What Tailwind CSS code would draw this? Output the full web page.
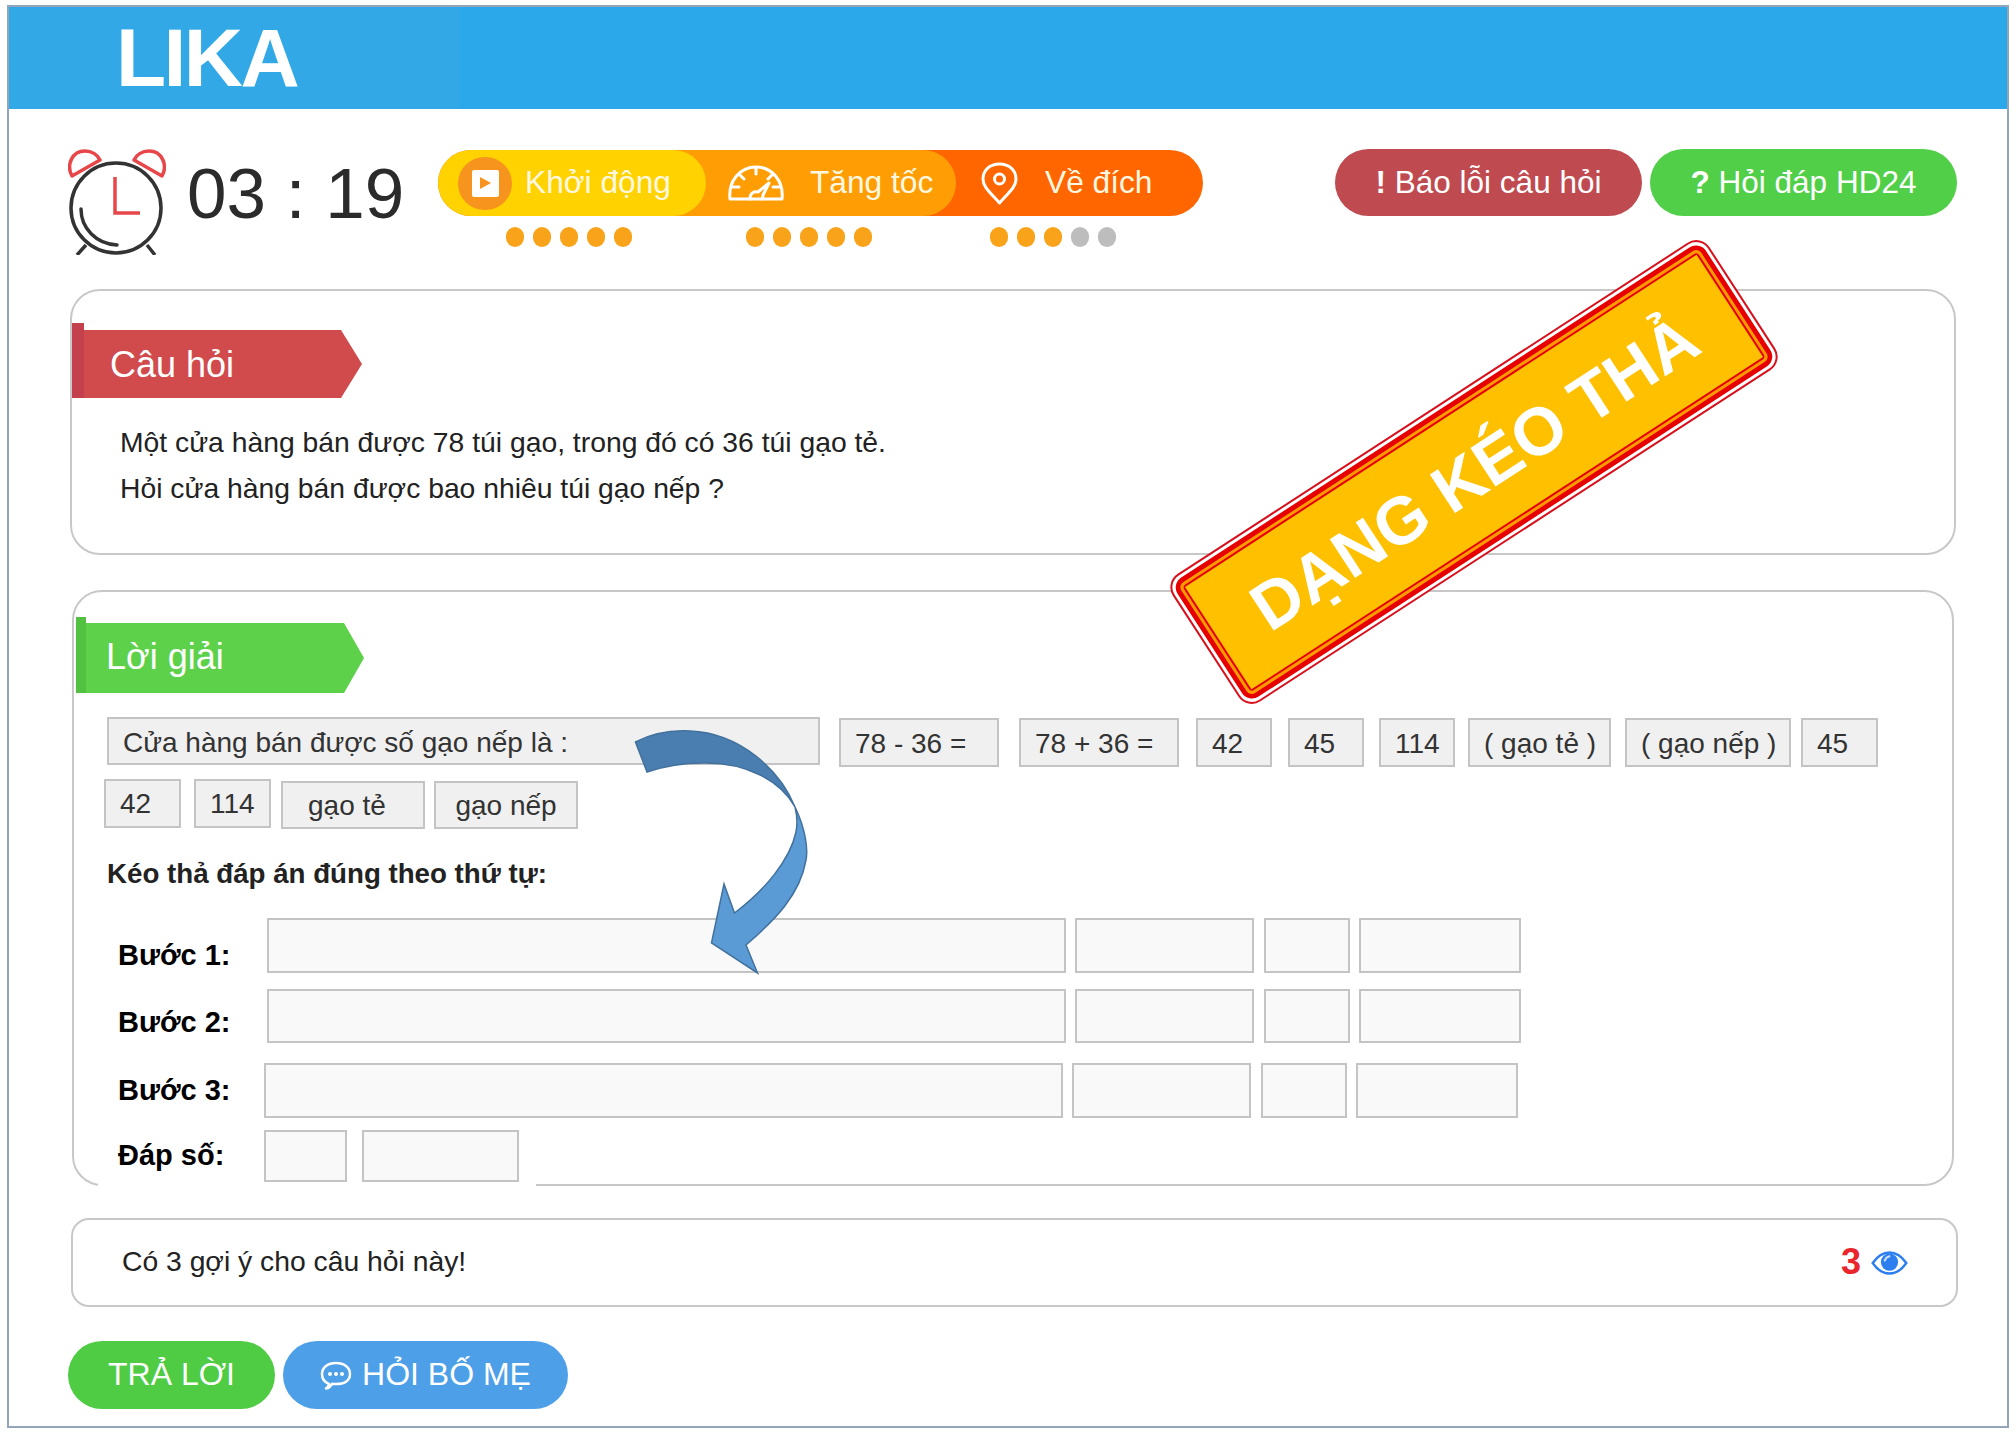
<!DOCTYPE html>
<html lang="vi">
<head>
    <meta charset="UTF-8">
    <meta name="viewport" content="width=device-width, initial-scale=1.0">
    <title>LIKA - Dạng kéo thả</title>
    <script src="https://cdn.jsdelivr.net/npm/@tailwindcss/browser@4"></script>
</head>
<body class="bg-white font-['Liberation_Sans',Arial,sans-serif]">
<div class="w-[2016px] h-[1432px] pt-[5px] pl-[7px] overflow-hidden">
    <div class="relative w-[2002px] h-[1423px] border-2 border-[#93a5b8] bg-white">
        <!-- header -->
        <header class="h-[102px] bg-[#2ba8ea] flex">
            <div class="w-[451px] bg-[#32a9e6] pl-[107px] flex items-center">
                <span class="text-[82px] leading-none font-bold text-white tracking-[-2.5px]">LIKA</span>
            </div>
        </header>

        <!-- timer + progress + actions -->
        <div class="mt-[40px] ml-[59px] h-[106px] flex items-start">
            <svg class="w-[98px] h-[106px] shrink-0" viewBox="68 149 98 106" fill="none">
                <path d="M72 176 C66 165 72 151 85 151 C92 151 98 155 100 160 Z" stroke="#e8474a" stroke-width="3.500" stroke-linejoin="round"/>
                <path d="M162 176 C168 165 162 151 149 151 C142 151 136 155 134 160 Z" stroke="#e8474a" stroke-width="3.500" stroke-linejoin="round"/>
                <circle cx="116" cy="208" r="45" stroke="#333" stroke-width="3.500"/>
                <path d="M81 209 C81 228 96 244 117 245" stroke="#333" stroke-width="3.500" stroke-linecap="round"/>
                <path d="M115 177 V213 H140" stroke="#e8474a" stroke-width="3.500"/>
                <path d="M86 245 L77 255 M147 245 L155 255" stroke="#333" stroke-width="3.500"/>
            </svg>
            <div class="ml-[21px] w-[251px] text-[71px] leading-[90px] text-[#2b2b2b] whitespace-nowrap">03 : 19</div>
            <div class="w-[765px] mt-[1px]">
                <div class="flex h-[66px] rounded-full bg-[#ff6600] text-[32px] text-[#fff8e0]">
                    <div class="relative z-20 w-[268px] rounded-full bg-[#ffd200] flex items-center pl-[20px]">
                        <span class="w-[54px] h-[53px] rounded-full bg-[#f7941d] flex items-center justify-center">
                            <span class="w-[27px] h-[27px] rounded-[2px] bg-white flex items-center justify-center">
                                <svg class="w-[14px] h-[14px]" viewBox="0 0 14 14"><path d="M2 1 L13 7 L2 13 Z" fill="#f7941d"/></svg>
                            </span>
                        </span>
                        <span class="ml-[13px] text-[31.700px]">Khởi động</span>
                    </div>
                    <div class="relative z-10 -ml-[40px] w-[290px] rounded-r-full bg-[#ff9d05] flex items-center pl-[62px]">
                        <svg class="w-[56px] h-[36px]" viewBox="0 0 56 36" fill="none" stroke="#fff" stroke-width="3" stroke-linejoin="round" stroke-linecap="round">
                            <path d="M2 34 C0 16 12 2 28 2 C44 2 56 16 54 34 Z"/>
                            <path d="M28 3 V9 M12 10 L16 14 M44 10 L40 14 M5 22 H11 M51 22 H45"/>
                            <path d="M22 34 C22 28 26 26 30 27 L41 18 L35 30 C35 32 35 33 34 34"/>
                        </svg>
                        <span class="ml-[26px] text-[31.700px]">Tăng tốc</span>
                    </div>
                    <div class="flex-1 flex items-center pl-[25px]">
                        <svg class="w-[37px] h-[43px]" viewBox="0 0 37 43" fill="none" stroke="#fff" stroke-width="3">
                            <path d="M18.500 41 C11 32 2 26 2 17 C2 8 9 2 18.500 2 C28 2 35 8 35 17 C35 26 26 32 18.500 41 Z" stroke-linejoin="round"/>
                            <circle cx="18.500" cy="17" r="5"/>
                        </svg>
                        <span class="ml-[27px] text-[31.700px]">Về đích</span>
                    </div>
                </div>
                <div class="mt-[11px] flex">
                    <div class="ml-[68px] flex gap-[9px]">
                        <span class="w-[18px] h-[20px] rounded-full bg-[#f9a31a]"></span>
                        <span class="w-[18px] h-[20px] rounded-full bg-[#f9a31a]"></span>
                        <span class="w-[18px] h-[20px] rounded-full bg-[#f9a31a]"></span>
                        <span class="w-[18px] h-[20px] rounded-full bg-[#f9a31a]"></span>
                        <span class="w-[18px] h-[20px] rounded-full bg-[#f9a31a]"></span>
                    </div>
                    <div class="ml-[114px] flex gap-[9px]">
                        <span class="w-[18px] h-[20px] rounded-full bg-[#f9a31a]"></span>
                        <span class="w-[18px] h-[20px] rounded-full bg-[#f9a31a]"></span>
                        <span class="w-[18px] h-[20px] rounded-full bg-[#f9a31a]"></span>
                        <span class="w-[18px] h-[20px] rounded-full bg-[#f9a31a]"></span>
                        <span class="w-[18px] h-[20px] rounded-full bg-[#f9a31a]"></span>
                    </div>
                    <div class="ml-[118px] flex gap-[9px]">
                        <span class="w-[18px] h-[20px] rounded-full bg-[#f9a31a]"></span>
                        <span class="w-[18px] h-[20px] rounded-full bg-[#f9a31a]"></span>
                        <span class="w-[18px] h-[20px] rounded-full bg-[#f9a31a]"></span>
                        <span class="w-[18px] h-[20px] rounded-full bg-[#bdbdbd]"></span>
                        <span class="w-[18px] h-[20px] rounded-full bg-[#bdbdbd]"></span>
                    </div>
                </div>
            </div>
            <button class="ml-[132px] w-[307px] h-[67px] rounded-full bg-[#bf4a50] text-white text-[31.500px]"><b>!</b> Báo lỗi câu hỏi</button>
            <button class="ml-[8px] w-[307px] h-[67px] rounded-full bg-[#51cf48] text-white text-[31.500px]"><b>?</b> Hỏi đáp HD24</button>
        </div>

        <!-- question -->
        <section class="mt-[34px] ml-[61px] w-[1886px] h-[266px] border-2 border-[#c8c8c8] rounded-[30px]">
            <div class="relative mt-[32px] w-[290px] h-[75px]">
                <div class="absolute left-0 top-[7px] w-[290px] h-[68px] bg-[#d14b4d] [clip-path:polygon(0_0,269px_0,100%_50%,269px_100%,0_100%)] text-white text-[36px] leading-[70px] pl-[38px]">Câu hỏi</div>
                <div class="absolute left-0 top-0 w-[12px] h-[75px] bg-[#c4404c]"></div>
            </div>
            <div class="mt-[21px] pl-[48px] text-[28.300px] leading-[46px] text-[#222]">
                <p>Một cửa hàng bán được 78 túi gạo, trong đó có 36 túi gạo tẻ.</p>
                <p>Hỏi cửa hàng bán được bao nhiêu túi gạo nếp ?</p>
            </div>
        </section>

        <!-- solution -->
        <section class="relative mt-[35px] ml-[63px] w-[1882px] h-[596px] border-2 border-[#c8c8c8] rounded-[30px]">
            <div class="relative mt-[25px] ml-[2px] w-[288px] h-[76px]">
                <div class="absolute left-0 top-[6px] w-[288px] h-[70px] bg-[#5dd14a] [clip-path:polygon(0_0,268px_0,100%_50%,268px_100%,0_100%)] text-white text-[36px] leading-[68px] pl-[30px]">Lời giải</div>
                <div class="absolute left-0 top-0 w-[10px] h-[76px] bg-[#52c040]"></div>
            </div>

            <div class="flex items-start mt-[24px] ml-[33px] text-[28px] text-[#333] whitespace-nowrap">
                <div class="w-[713px] h-[48px] leading-[47px] pl-[14px] bg-[#f0f0f0] border-2 border-[#c4c4c4]">Cửa hàng bán được số gạo nếp là :</div>
                <div class="ml-[19px] mt-[1px] w-[160px] h-[49px] leading-[47px] pl-[14px] bg-[#f0f0f0] border-2 border-[#c4c4c4]">78 - 36 =</div>
                <div class="ml-[20px] mt-[1px] w-[160px] h-[49px] leading-[47px] pl-[14px] bg-[#f0f0f0] border-2 border-[#c4c4c4]">78 + 36 =</div>
                <div class="ml-[17px] mt-[1px] w-[76px] h-[49px] leading-[47px] pl-[14px] bg-[#f0f0f0] border-2 border-[#c4c4c4]">42</div>
                <div class="ml-[16px] mt-[1px] w-[76px] h-[49px] leading-[47px] pl-[14px] bg-[#f0f0f0] border-2 border-[#c4c4c4]">45</div>
                <div class="ml-[15px] mt-[1px] w-[76px] h-[49px] leading-[47px] pl-[14px] bg-[#f0f0f0] border-2 border-[#c4c4c4]">114</div>
                <div class="ml-[13px] mt-[1px] w-[143px] h-[49px] leading-[47px] pl-[14px] bg-[#f0f0f0] border-2 border-[#c4c4c4]">( gạo tẻ )</div>
                <div class="ml-[14px] mt-[1px] w-[166px] h-[49px] leading-[47px] pl-[14px] bg-[#f0f0f0] border-2 border-[#c4c4c4]">( gạo nếp )</div>
                <div class="ml-[10px] mt-[1px] w-[77px] h-[49px] leading-[47px] pl-[14px] bg-[#f0f0f0] border-2 border-[#c4c4c4]">45</div>
            </div>
            <div class="flex items-start mt-[12px] ml-[30px] h-[50px] text-[28px] text-[#333] whitespace-nowrap">
                <div class="w-[77px] h-[49px] leading-[46px] pl-[14px] bg-[#f0f0f0] border-2 border-[#c4c4c4]">42</div>
                <div class="ml-[13px] w-[77px] h-[49px] leading-[46px] pl-[14px] bg-[#f0f0f0] border-2 border-[#c4c4c4]">114</div>
                <div class="ml-[10px] mt-[2px] w-[144px] h-[48px] leading-[45px] pl-[25px] bg-[#f0f0f0] border-2 border-[#c4c4c4]">gạo tẻ</div>
                <div class="ml-[9px] mt-[2px] w-[144px] h-[48px] leading-[45px] text-center bg-[#f0f0f0] border-2 border-[#c4c4c4]">gạo nếp</div>
            </div>

            <h3 class="mt-[25px] ml-[33px] h-[40px] leading-[40px] text-[27.700px] font-bold text-[#222]">Kéo thả đáp án đúng theo thứ tự:</h3>

            <div class="mt-[24px] text-[29px] font-bold text-black">
                <div class="flex items-center h-[55px]">
                    <span class="pl-[44px] w-[193px] mt-[20px]">Bước 1:</span>
                    <div class="w-[799px] h-[55px] bg-[#f9f9f9] border-2 border-[#c4c4c4]"></div>
                    <div class="ml-[9px] w-[179px] h-[55px] bg-[#f9f9f9] border-2 border-[#c4c4c4]"></div>
                    <div class="ml-[10px] w-[86px] h-[55px] bg-[#f9f9f9] border-2 border-[#c4c4c4]"></div>
                    <div class="ml-[9px] w-[162px] h-[55px] bg-[#f9f9f9] border-2 border-[#c4c4c4]"></div>
                </div>
                <div class="flex items-center h-[54px] mt-[16px]">
                    <span class="pl-[44px] w-[193px] mt-[14px]">Bước 2:</span>
                    <div class="w-[799px] h-[54px] bg-[#f9f9f9] border-2 border-[#c4c4c4]"></div>
                    <div class="ml-[9px] w-[179px] h-[54px] bg-[#f9f9f9] border-2 border-[#c4c4c4]"></div>
                    <div class="ml-[10px] w-[86px] h-[54px] bg-[#f9f9f9] border-2 border-[#c4c4c4]"></div>
                    <div class="ml-[9px] w-[162px] h-[54px] bg-[#f9f9f9] border-2 border-[#c4c4c4]"></div>
                </div>
                <div class="flex items-center h-[55px] mt-[20px]">
                    <span class="pl-[44px] w-[190px]">Bước 3:</span>
                    <div class="w-[799px] h-[55px] bg-[#f9f9f9] border-2 border-[#c4c4c4]"></div>
                    <div class="ml-[9px] w-[179px] h-[55px] bg-[#f9f9f9] border-2 border-[#c4c4c4]"></div>
                    <div class="ml-[10px] w-[86px] h-[55px] bg-[#f9f9f9] border-2 border-[#c4c4c4]"></div>
                    <div class="ml-[9px] w-[162px] h-[55px] bg-[#f9f9f9] border-2 border-[#c4c4c4]"></div>
                </div>
                <div class="relative z-10 flex items-center h-[52px] mt-[12px]">
                    <span class="pl-[44px] w-[190px]">Đáp số:</span>
                    <div class="w-[83px] h-[52px] bg-[#f9f9f9] border-2 border-[#c4c4c4]"></div>
                    <div class="ml-[15px] w-[157px] h-[52px] bg-[#f9f9f9] border-2 border-[#c4c4c4]"></div>
                </div>
            </div>
            <div class="absolute left-[24px] -bottom-[3px] w-[438px] h-[7px] bg-white"></div>
        </section>

        <!-- hints -->
        <section class="mt-[32px] ml-[62px] w-[1887px] h-[89px] border-2 border-[#c8c8c8] rounded-[18px] flex items-center pl-[49px] pr-[48px] text-[28.300px] text-[#222]">
            <span class="mt-[-2px]">Có 3 gợi ý cho câu hỏi này!</span>
            <span class="ml-auto mt-[-2px] text-[36px] font-bold text-[#e8262c]">3</span>
            <svg class="ml-[10px] w-[37px] h-[24px]" viewBox="0 0 38 25" fill="none">
                <path d="M1.500 12.500 C8 3 14 1.500 19 1.500 C24 1.500 30 3 36.500 12.500 C30 22 24 23.500 19 23.500 C14 23.500 8 22 1.500 12.500 Z" stroke="#2d7ff0" stroke-width="2.500"/>
                <circle cx="19" cy="11.500" r="9" fill="#2d7ff0"/>
                <path d="M14 10 C15 7 17 6 19 5.500" stroke="#cfe2fb" stroke-width="2" stroke-linecap="round"/>
            </svg>
        </section>

        <!-- bottom buttons -->
        <div class="mt-[34px] ml-[59px] flex gap-[8px] text-[32px] text-white">
            <button class="w-[207px] h-[68px] pb-[3px] rounded-full bg-[#4fcc43]">TRẢ LỜI</button>
            <button class="w-[285px] h-[68px] rounded-full bg-[#4d9fe8] flex items-center justify-center gap-[10px]">
                <svg class="w-[32px] h-[32px]" viewBox="0 0 32 32" fill="none">
                    <path d="M9 25 C4 23 2 19 2 15 C2 8 8 4 16 4 C24 4 30 8 30 15 C30 22 24 25 16 25 C14.500 25 13 25 12 24.700 C11 27 9 29 6 29.500 C8 28 9 26.500 9 25 Z" stroke="#fff" stroke-width="2.500" stroke-linejoin="round"/>
                    <circle cx="10" cy="15" r="2" fill="#fff"/>
                    <circle cx="16" cy="15" r="2" fill="#fff"/>
                    <circle cx="22" cy="15" r="2" fill="#fff"/>
                </svg>
                <span class="pb-[3px]">HỎI BỐ MẸ</span>
            </button>
        </div>

        <!-- blue arrow over the content, page coordinates -->
        <svg class="absolute left-[-9px] top-[-7px] w-[2016px] h-[1432px] pointer-events-none z-20" viewBox="0 0 2016 1432">
            <path d="M635.500 742 C655 732 672 730 690 731 C740 733 780 770 795 807 C780 780 745 762 703 763 C683 763 665 766 647 772 Z" fill="#4a7eb0" stroke="#41719c" stroke-width="1.500"/>
            <path d="M795 807 C806 830 808 850 806 860 C800 895 775 920 746 945 L757.500 973 L711.500 943 L724 884 L734.500 913 C765 890 790 860 796 832 C798 822 797 815 795 807 Z" fill="#5b9bd5" stroke="#41719c" stroke-width="1.500"/>
        </svg>

        <!-- stamp -->
        <div class="absolute z-30 left-[1145px] top-[389px] w-[640px] h-[152px] rotate-[-33deg] rounded-[16px] border-2 border-[#d8101c] bg-white p-[3px]">
            <div class="w-full h-full rounded-[12px] bg-[#e60000] p-[5px]">
                <div class="w-full h-full rounded-[6px] bg-[#ff9a00] p-[3px]">
                    <div class="w-full h-full rounded-[4px] bg-[#e60000] p-[2px]">
                        <div class="w-full h-full bg-[#ffc000] flex items-center justify-center text-white font-bold text-[67px] leading-none whitespace-nowrap">DẠNG KÉO THẢ</div>
                    </div>
                </div>
            </div>
        </div>
    </div>
</div>
</body>
</html>
